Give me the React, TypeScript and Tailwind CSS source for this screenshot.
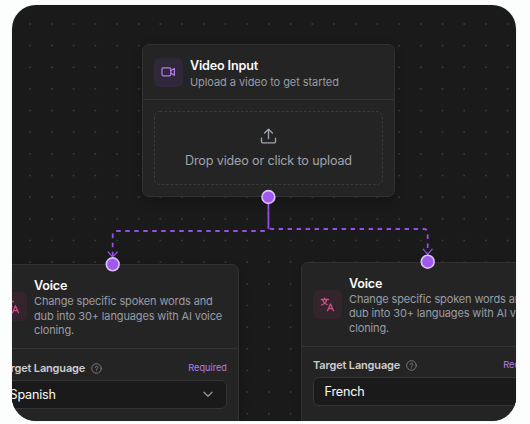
import type { ReactNode } from 'react';

function VideoIcon() {
  return (
    <svg width="15" height="12" viewBox="0 0 15 12" fill="none" stroke="#b07fe8" strokeWidth="1.2" strokeLinejoin="round" strokeLinecap="round">
      <rect x="1" y="1.8" width="8.8" height="8" rx="1.2" />
      <path d="M9.8 4.8l3.6-2.3v6.8L9.8 7" />
    </svg>
  );
}

function TranslateIcon() {
  return (
    <svg width="15" height="15" viewBox="0 0 15 15" fill="none" stroke="#d14d8b" strokeWidth="1.3" strokeLinejoin="round" strokeLinecap="round">
      <path d="M1.2 2.5h7.2M4.8 1.2v1.3M2.8 2.5c.4 2.3 2 4.2 4.4 5M6.8 2.5C6.4 4.8 4.6 6.9 1.6 8" />
      <path d="M7.5 13.7l3-6.8 3 6.8M8.5 11.6h4" />
    </svg>
  );
}

function UploadIcon() {
  return (
    <svg width="18" height="18" viewBox="0 0 18 18" fill="none" stroke="#a0a3ad" strokeWidth="1.35" strokeLinejoin="round" strokeLinecap="round">
      <path d="M8.5 11.5V2.2M4.6 6.1l3.9-3.9 3.9 3.9M1.5 11.2v3.6c0 .6.4 1 1 1h12c.6 0 1-.4 1-1v-3.6" />
    </svg>
  );
}

function HelpIcon() {
  return (
    <svg className="ml-[6px]" width="11" height="11" viewBox="0 0 11 11" fill="none" stroke="#777b85" strokeWidth="0.95" strokeLinecap="round">
      <circle cx="5.5" cy="5.5" r="4.8" />
      <path d="M4.2 4.4c.1-1.8 2.7-1.6 2.7 0 0 1-1.3 1-1.3 2.1M5.6 7.9v.1" />
    </svg>
  );
}

function Card({ className, children }: { className: string; children: ReactNode }) {
  return (
    <div className={`absolute w-[253px] rounded-[7px] border border-[#323232] bg-[#242424] shadow-[0_4px_12px_rgba(0,0,0,0.2)] ${className}`}>
      {children}
    </div>
  );
}

function VoiceCard({ className, titleClass, bodyClass, language }: { className: string; titleClass: string; bodyClass: string; language: string }) {
  return (
    <Card className={className}>
      <div className="flex h-[84px] items-center gap-[7px] border-b border-[#323232] pl-[11px]">
        <div className="flex size-[29px] shrink-0 items-center justify-center rounded-[6px] bg-[#33252b]">
          <TranslateIcon />
        </div>
        <div className={`whitespace-nowrap ${titleClass}`}>
          <h2 className="text-[12.6px] leading-[17px] font-semibold tracking-[-0.2px] text-[#fafafa]">Voice</h2>
          <p className="text-[11px] leading-[14.5px] tracking-[-0.13px] text-[#999ca5]">
            Change specific spoken words and
            <br />
            dub into 30+ languages with AI voice
            <br />
            cloning.
          </p>
        </div>
      </div>
      <div className={`px-[11px] ${bodyClass}`}>
        <div className="flex h-[18px] items-center">
          <span className="text-[11px] font-semibold tracking-[-0.16px] whitespace-nowrap text-[#cccdd2]">Target Language</span>
          <HelpIcon />
          <span className="ml-auto text-[9.2px] text-[#b07fe8]">Required</span>
        </div>
        <div className="mt-[3px] flex h-[29px] items-center justify-between rounded-[6px] border border-[#343434] bg-[#1a1a1a] pr-[13px] pl-[10.5px]">
          <span className="pt-[2px] text-[12.6px] tracking-[-0.18px] text-[#fafafa]">{language}</span>
          <svg width="10" height="7" viewBox="0 0 10 7" fill="none" stroke="#92949a" strokeWidth="1.3" strokeLinecap="round" strokeLinejoin="round">
            <path d="M1 1.3l4 4 4-4" />
          </svg>
        </div>
      </div>
    </Card>
  );
}

const dots = Array.from({ length: 20 }, (_, row) =>
  Array.from({ length: 24 }, (_, col) => ({ x: 18.2 + col * 21.7, y: 19 + row * 21.65 })),
).flat();

export default function App() {
  return (
    <main className="h-[424px] w-[530px] overflow-hidden bg-[#fcfdfd] pt-[5px] pl-[12px] font-[Inter,sans-serif]">
      <div className="relative h-[416px] w-[504px] overflow-hidden rounded-[24px] bg-[#1a1a1a] shadow-[0_0_0_1px_#f3f4f4]">
        <svg className="absolute inset-0" width="504" height="416" fill="#3a3a3a">
          {dots.map((dot, i) => (
            <rect key={i} x={dot.x - 0.9} y={dot.y - 0.8} width="1.8" height="1.6" />
          ))}
        </svg>

        <Card className="top-[39px] left-[130px] h-[153px]">
          <div className="flex h-[55px] items-center gap-[7px] border-b border-[#323232] pl-[11px]">
            <div className="flex size-[29px] items-center justify-center rounded-[6px] bg-[#30283a]">
              <VideoIcon />
            </div>
            <div className="mt-[3px] whitespace-nowrap">
              <h1 className="text-[12.6px] leading-[16px] font-semibold tracking-[-0.17px] text-[#fafafa]">Video Input</h1>
              <p className="text-[11px] leading-[16px] tracking-[-0.07px] text-[#999ca5]">Upload a video to get started</p>
            </div>
          </div>
          <div className="relative mx-[11px] mt-[11px] flex h-[74px] flex-col items-center pt-[16px]">
            <svg className="absolute inset-0" width="229" height="74" fill="none">
              <rect x="0.5" y="0.5" width="228" height="73" rx="5.5" stroke="#3b3b3b" strokeDasharray="2.7 1.8" />
            </svg>
            <UploadIcon />
            <span className="mt-[6px] text-[12.6px] leading-[20px] tracking-[-0.15px] whitespace-nowrap text-[#a0a3ab]">Drop video or click to upload</span>
          </div>
        </Card>

        <VoiceCard className="top-[259px] -left-[26px] h-[180px]" titleClass="pt-[2px]" bodyClass="pt-[10px]" language="Spanish" />
        <VoiceCard className="top-[257px] left-[289px] h-[180px]" titleClass="pt-[1px]" bodyClass="pt-[9px]" language="French" />

        <svg className="absolute inset-0" width="504" height="416" fill="none">
          <g stroke="#954fe5" strokeWidth="1.8" strokeDasharray="4.5 4.5">
            <path d="M256.4 192v30q0 4-4 4H104.7q-4 0-4 4v23" />
            <path d="M256.4 192v28q0 4 4 4h151.3q4 0 4 4v23" strokeDashoffset="4.5" />
          </g>
          <g stroke="#954fe5" strokeWidth="1.2" strokeLinecap="round">
            <path d="M96.2 247l4.5 5.2 4.5-5.2" />
            <path d="M411.2 244.2l4.5 5.2 4.5-5.2" />
          </g>
          <g fill="#9f59ed" stroke="#dcc0fb" strokeWidth="1.6">
            <circle cx="256.4" cy="192" r="6.4" />
            <circle cx="100.7" cy="259.3" r="6.4" />
            <circle cx="415.7" cy="256.7" r="6.4" />
          </g>
        </svg>
      </div>
    </main>
  );
}
